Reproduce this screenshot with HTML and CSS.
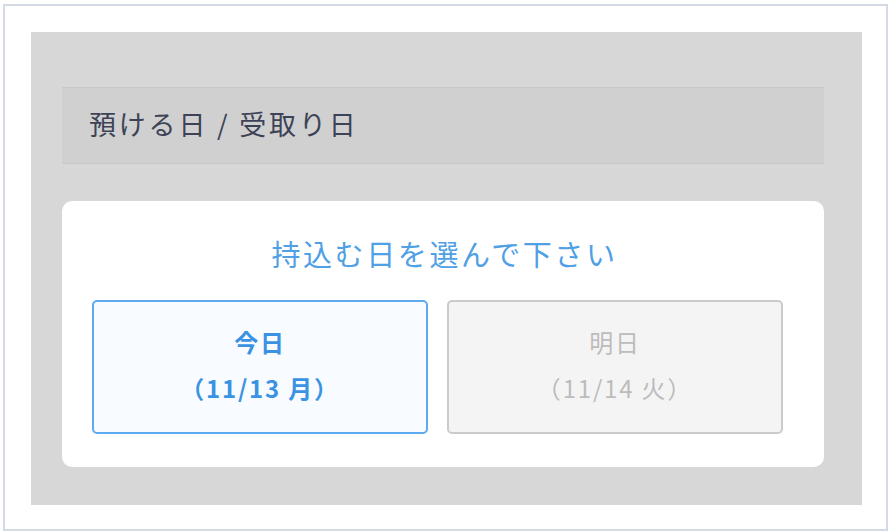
FILE: index.html
```html
<!DOCTYPE html>
<html lang="ja">
<head>
<meta charset="utf-8">
<title>預ける日 / 受取り日</title>
<link rel="stylesheet" href="styles.css">
</head>
<body>
<div class="frame">
  <div class="panel">
    <div class="section-head">預ける日 / 受取り日</div>
    <div class="card">
      <div class="card-title">持込む日を選んで下さい</div>
      <div class="options">
        <button class="option option-active" type="button">
          <span class="opt-line">今日</span>
          <span class="opt-line">（11/13 月）</span>
        </button>
        <button class="option option-disabled" type="button">
          <span class="opt-line">明日</span>
          <span class="opt-line">（11/14 火）</span>
        </button>
      </div>
    </div>
  </div>
</div>
</body>
</html>
```

FILE: styles.css
```css
html, body {
  margin: 0;
  padding: 0;
  background: #ffffff;
}
body {
  font-family: "Noto Sans CJK JP", "Noto Sans", sans-serif;
  width: 891px;
  height: 532px;
  overflow: hidden;
}
.frame {
  box-sizing: border-box;
  margin: 4px 3px 1px 3px;
  width: 885px;
  height: 527px;
  border: 2px solid #d3dae4;
  padding: 26px 24px 24px 26px;
  background: #ffffff;
}
.panel {
  box-sizing: border-box;
  height: 100%;
  background: #d7d7d7;
  padding: 55px 38px 38px 31px;
  display: flex;
  flex-direction: column;
}
.section-head {
  box-sizing: border-box;
  height: 77px;
  background: #d0d0d0;
  border-top: 1px solid #c7c8cc;
  border-bottom: 1px solid #c7c8cc;
  display: flex;
  align-items: center;
  padding-left: 27px;
  padding-bottom: 4px;
  font-size: 27px;
  letter-spacing: 2.8px;
  color: #3d4356;
}
.card {
  margin-top: 37px;
  flex: 1;
  background: #ffffff;
  border-radius: 10px;
  display: flex;
  flex-direction: column;
}
.card-title {
  margin-top: 32px;
  text-align: center;
  font-size: 29px;
  letter-spacing: 2.6px;
  line-height: 40px;
  color: #4fa0e5;
  padding-left: 3px;
}
.options {
  display: flex;
  gap: 19px;
  margin: 27px 41px 33px 30px;
  flex: 1;
}
.option {
  flex: 1;
  box-sizing: border-box;
  border-radius: 5px;
  display: flex;
  flex-direction: column;
  align-items: center;
  justify-content: center;
  font-family: "Noto Sans CJK JP", "Noto Sans", sans-serif;
  font-size: 24px;
  padding: 0 0 5px 0;
  margin: 0;
}
.opt-line {
  display: block;
  line-height: 46px;
  letter-spacing: 1.8px;
}
.option-active {
  background: #f8fbff;
  border: 2px solid #5eaaf0;
  color: #3a93e2;
  font-weight: 700;
}
.option-disabled {
  background: #f4f4f4;
  border: 2px solid #cbcbcb;
  color: #bcbcbc;
  font-weight: 400;
}
```
